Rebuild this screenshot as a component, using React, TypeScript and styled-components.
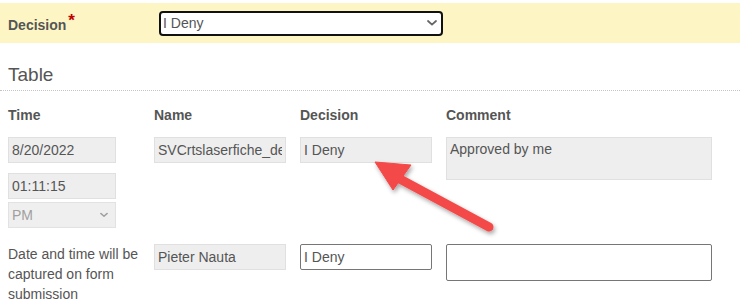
import styled, { createGlobalStyle } from 'styled-components';

const GlobalStyle = createGlobalStyle`
  html, body {
    margin: 0;
    padding: 0;
    background: #ffffff;
  }
  body {
    font-family: "Liberation Sans", Arial, sans-serif;
    color: #555555;
  }
`;

const rows = [
  {
    kind: 'saved',
    date: '8/20/2022',
    time: '01:11:15',
    ampm: 'PM',
    name: 'SVCrtslaserfiche_demo',
    decision: 'I Deny',
    comment: 'Approved by me',
  },
  {
    kind: 'new',
    note: 'Date and time will be captured on form submission',
    name: 'Pieter Nauta',
    decision: 'I Deny',
    comment: '',
  },
];

const Chevron = ({ size, color }: { size: number; color: string }) => (
  <svg width={size} height={size * 0.6} viewBox="0 0 10 6" fill="none">
    <path d="M1 1l4 3.6L9 1" stroke={color} strokeWidth="1.8" strokeLinecap="round" strokeLinejoin="round" />
  </svg>
);

export default function App() {
  return (
    <Page>
      <GlobalStyle />
      <DecisionBar>
        <FieldLabel>
          Decision<Required>*</Required>
        </FieldLabel>
        <SelectWrap $width={284}>
          <Select $focused defaultValue="deny">
            <option value="deny">I Deny</option>
            <option value="approve">I Approve</option>
          </Select>
          <ChevronSlot $right={6}>
            <Chevron size={10} color="#666" />
          </ChevronSlot>
        </SelectWrap>
      </DecisionBar>

      <SectionTitle>Table</SectionTitle>

      <Table>
        <HeadCell>Time</HeadCell>
        <HeadCell>Name</HeadCell>
        <HeadCell>Decision</HeadCell>
        <HeadCell>Comment</HeadCell>

        {rows.map((row, i) => (
          <Row key={i} $last={i === rows.length - 1}>
            <Cell>
              {row.kind === 'saved' ? (
                <TimeStack>
                  <Field $width={108} $readOnly readOnly value={row.date} />
                  <Field $width={108} $readOnly readOnly value={row.time} style={{ marginTop: 7 }} />
                  <SelectWrap $width={108}>
                    <Select disabled defaultValue="PM">
                      <option>AM</option>
                      <option>PM</option>
                    </Select>
                    <ChevronSlot $right={8}>
                      <Chevron size={8} color="#a0a0a0" />
                    </ChevronSlot>
                  </SelectWrap>
                </TimeStack>
              ) : (
                <Note>{row.note}</Note>
              )}
            </Cell>
            <Cell>
              <Field $width={132} $readOnly readOnly value={row.name} />
            </Cell>
            <Cell>
              <Field $width={132} $readOnly={row.kind === 'saved'} readOnly value={row.decision} />
            </Cell>
            <Cell>
              <Comment
                $readOnly={row.kind === 'saved'}
                $height={row.kind === 'saved' ? 43 : 37}
                readOnly
                value={row.comment}
              />
            </Cell>
          </Row>
        ))}
      </Table>

      <Overlay width="740" height="299" viewBox="0 0 740 299">
        <defs>
          <filter id="arrowShadow" x="-20%" y="-20%" width="140%" height="140%">
            <feDropShadow dx="1.5" dy="2.5" stdDeviation="2" floodColor="#000" floodOpacity="0.35" />
          </filter>
        </defs>
        <g filter="url(#arrowShadow)" fill="#f44848" stroke="#f44848">
          <line x1="489" y1="227" x2="398" y2="178" strokeWidth="9" strokeLinecap="round" />
          <polygon points="375,162 411,165 393,190" strokeWidth="1" strokeLinejoin="round" />
        </g>
      </Overlay>
    </Page>
  );
}

const Page = styled.div`
  position: relative;
  width: 740px;
  height: 299px;
  overflow: hidden;
  padding-top: 3px;
  box-sizing: border-box;
`;

const DecisionBar = styled.div`
  display: flex;
  align-items: center;
  height: 40px;
  padding: 0 8px;
  background: #fdf6c4;
`;

const FieldLabel = styled.label`
  width: 151px;
  font-size: 14px;
  font-weight: bold;
  color: #555;
  margin-top: -2px;
`;

const Required = styled.span`
  color: #c00000;
  font-size: 17px;
  margin-left: 2px;
  vertical-align: 4px;
`;

const SelectWrap = styled.div<{ $width: number }>`
  position: relative;
  width: ${(p) => p.$width}px;
`;

const Select = styled.select<{ $focused?: boolean }>`
  appearance: none;
  display: block;
  width: 100%;
  height: ${(p) => (p.$focused ? 25 : 26)}px;
  margin: 0;
  padding: 0 0 0 ${(p) => (p.$focused ? 2 : 3)}px;
  box-sizing: border-box;
  font-family: "Liberation Sans", Arial, sans-serif;
  font-size: 14px;
  color: ${(p) => (p.$focused ? '#555' : '#a0a0a0')};
  background: ${(p) => (p.$focused ? '#fff' : '#efefef')};
  border: ${(p) => (p.$focused ? '2px solid #111' : '1px solid #e2e2e2')};
  border-radius: ${(p) => (p.$focused ? 4 : 0)}px;
  outline: none;
  opacity: 1;
`;

const ChevronSlot = styled.span<{ $right: number }>`
  position: absolute;
  right: ${(p) => p.$right}px;
  top: 50%;
  transform: translateY(-50%);
  display: flex;
  pointer-events: none;
`;

const SectionTitle = styled.h2`
  margin: 21px 0 0;
  padding: 0 8px 4px;
  font-size: 19px;
  line-height: 22px;
  font-weight: normal;
  color: #555;
  border-bottom: 1px dotted #c4c4c4;
`;

const Table = styled.div`
  display: grid;
  grid-template-columns: 146px 146px 146px 1fr;
  padding: 14px 8px 0;
`;

const HeadCell = styled.div`
  font-size: 14px;
  line-height: 20px;
  font-weight: bold;
  color: #555;
  margin-bottom: 12px;
`;

const Row = styled.div<{ $last?: boolean }>`
  display: contents;
  & > div {
    padding-bottom: ${(p) => (p.$last ? 0 : 16)}px;
  }
`;

const Cell = styled.div`
  display: flex;
  flex-direction: column;
  align-items: flex-start;
`;

const TimeStack = styled.div`
  display: flex;
  flex-direction: column;
  gap: 3px;
`;

const Field = styled.input<{ $width: number; $readOnly?: boolean }>`
  display: block;
  width: ${(p) => p.$width}px;
  height: 26px;
  margin: 0;
  padding: 0 3px;
  box-sizing: border-box;
  font-family: "Liberation Sans", Arial, sans-serif;
  font-size: 14px;
  color: #555;
  background: ${(p) => (p.$readOnly ? '#eeeeee' : '#ffffff')};
  border: 1px solid ${(p) => (p.$readOnly ? '#e0e0e0' : '#767676')};
  border-radius: ${(p) => (p.$readOnly ? 0 : 2)}px;
  outline: none;
`;

const Comment = styled.textarea<{ $readOnly?: boolean; $height: number }>`
  display: block;
  width: 266px;
  height: ${(p) => p.$height}px;
  margin: 0;
  padding: 2px 3px;
  box-sizing: border-box;
  resize: none;
  overflow: hidden;
  font-family: "Liberation Sans", Arial, sans-serif;
  font-size: 14px;
  line-height: 18px;
  color: #555;
  background: ${(p) => (p.$readOnly ? '#eeeeee' : '#ffffff')};
  border: 1px solid ${(p) => (p.$readOnly ? '#e0e0e0' : '#767676')};
  border-radius: ${(p) => (p.$readOnly ? 0 : 2)}px;
  outline: none;
`;

const Note = styled.div`
  width: 136px;
  font-size: 14px;
  line-height: 20px;
  color: #555;
`;

const Overlay = styled.svg`
  position: absolute;
  left: 0;
  top: 0;
  pointer-events: none;
`;
